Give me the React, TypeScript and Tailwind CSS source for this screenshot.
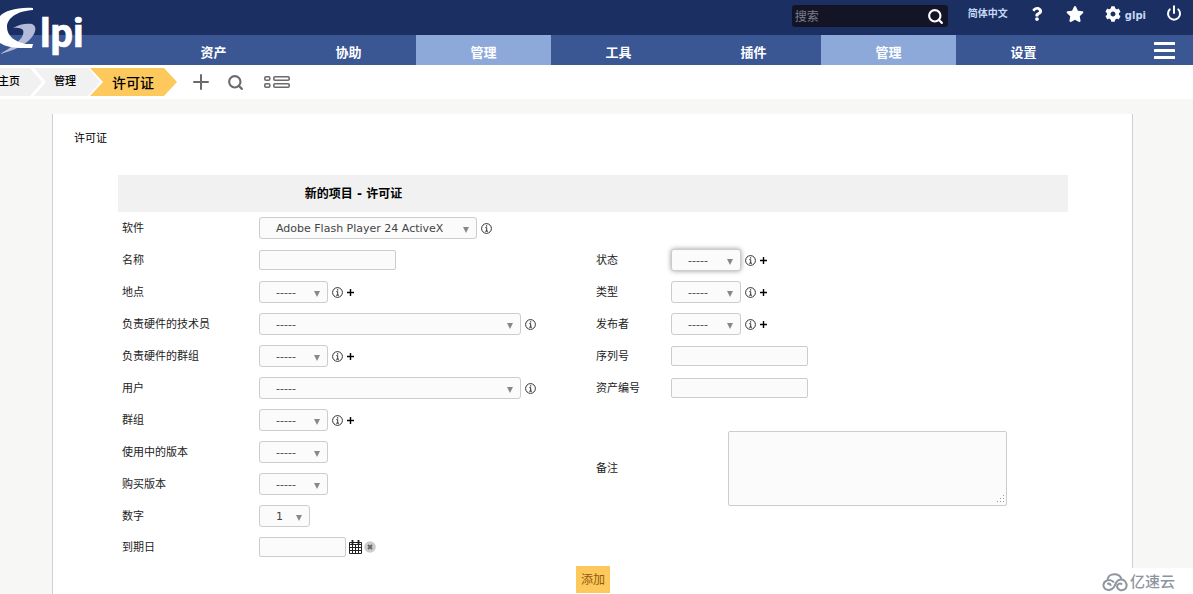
import { ReactNode } from "react";
import { Plus, Power, Search } from "lucide-react";
import { FaCog, FaQuestion, FaStar } from "react-icons/fa";

type Field = {
  id: string;
  label: string;
  kind: "select" | "text" | "date";
  value?: string;
  width: string;
  info?: boolean;
  add?: boolean;
  focused?: boolean;
};

const menu = [
  { label: "资产", active: false },
  { label: "协助", active: false },
  { label: "管理", active: true },
  { label: "工具", active: false },
  { label: "插件", active: false },
  { label: "管理", active: true },
  { label: "设置", active: false },
];

const leftFields: Field[] = [
  { id: "software", label: "软件", kind: "select", value: "Adobe Flash Player 24 ActiveX", width: "w-[218px]", info: true },
  { id: "name", label: "名称", kind: "text", width: "w-[137px]" },
  { id: "location", label: "地点", kind: "select", width: "w-[69px]", info: true, add: true },
  { id: "tech", label: "负责硬件的技术员", kind: "select", width: "w-[262px]", info: true },
  { id: "techgroup", label: "负责硬件的群组", kind: "select", width: "w-[69px]", info: true, add: true },
  { id: "user", label: "用户", kind: "select", width: "w-[262px]", info: true },
  { id: "group", label: "群组", kind: "select", width: "w-[69px]", info: true, add: true },
  { id: "version-use", label: "使用中的版本", kind: "select", width: "w-[69px]" },
  { id: "version-buy", label: "购买版本", kind: "select", width: "w-[69px]" },
  { id: "number", label: "数字", kind: "select", value: "1", width: "w-[51px]" },
  { id: "expire", label: "到期日", kind: "date", width: "w-[87px]" },
];

const rightFields: Field[] = [
  { id: "state", label: "状态", kind: "select", width: "w-[70px]", info: true, add: true, focused: true },
  { id: "type", label: "类型", kind: "select", width: "w-[70px]", info: true, add: true },
  { id: "publisher", label: "发布者", kind: "select", width: "w-[70px]", info: true, add: true },
  { id: "serial", label: "序列号", kind: "text", width: "w-[137px]" },
  { id: "inventory", label: "资产编号", kind: "text", width: "w-[137px]" },
];

function Logo() {
  return (
    <a href="#" aria-label="GLPI" className="absolute left-0 top-0 z-10">
      <svg width="90" height="60" viewBox="0 0 90 60">
        <path d="M13 28C19 24 27 23 32 24C37 26 36 32 32 37C25 46 12 51 0 54C10 48 18 43 22 37C25 31 24 27 13 28Z" fill="#b4bbd9" />
        <path d="M33 8C17 7 5 11 0 16V43C6 47 14 48 24 48H32L33 44H26C15 42 7 36 7 27C7 18 17 11 33 10Z" fill="#fff" />
        <text x="40" y="47" fill="#fff" stroke="#fff" strokeWidth="0.6" fontFamily="Roboto, sans-serif" fontWeight="700" fontSize="40">lpi</text>
      </svg>
    </a>
  );
}

function InfoIcon() {
  return (
    <svg width="11" height="11" viewBox="0 0 11 11" fill="none" stroke="#333">
      <circle cx="5.5" cy="5.5" r="4.9" />
      <path d="M4.3 4.6H5.7V8M4.2 8.2H7" />
      <path d="M5 2.8H6.2" strokeWidth="1.2" />
    </svg>
  );
}

function AddIcon() {
  return (
    <svg width="7" height="7" viewBox="0 0 7 7" stroke="#000" strokeWidth="1.4">
      <path d="M3.5 0V7M0 3.5H7" />
    </svg>
  );
}

function CalendarIcon() {
  return (
    <svg width="13" height="14" viewBox="0 0 13 14" fill="none" stroke="#222">
      <path d="M0.5 2.5H12.5V13.5H0.5ZM0.5 4.5H12.5M0.5 7.5H12.5M0.5 10.5H12.5M3.5 4V13.5M6.5 4V13.5M9.5 4V13.5" />
      <path d="M3.5 0V4M9.5 0V4" strokeWidth="1.8" />
    </svg>
  );
}

function SelectBox({ field }: { field: Field }) {
  const value = field.value ?? "-----";
  return (
    <span className={`relative block ${field.width}`}>
      <select
        id={field.id}
        className={`block h-[22px] w-full appearance-none rounded-[3px] border border-[#ccc] bg-[#fbfbfb] pt-[3px] pl-4 font-['DejaVu_Sans',sans-serif] text-[11px] text-[#444] outline-none ${
          field.focused ? "shadow-[0_0_5px_rgba(0,0,0,0.4)]" : ""
        }`}
      >
        <option>{value}</option>
      </select>
      <svg className="pointer-events-none absolute right-2 top-[10px]" width="6" height="6" viewBox="0 0 6 6">
        <path d="M0 0H6L3 6Z" fill="#888" />
      </svg>
    </span>
  );
}

function Control({ field }: { field: Field }) {
  if (field.kind === "select") {
    return <SelectBox field={field} />;
  }
  return (
    <input
      id={field.id}
      type="text"
      className={`h-5 rounded-[2px] border border-[#ccc] bg-[#fbfbfb] px-1 text-[11px] outline-none ${field.width}`}
    />
  );
}

function Row({ field, labelWidth }: { field: Field; labelWidth: string }) {
  return (
    <div className={`flex items-center ${field.kind === "date" ? "h-[30px]" : "h-8"}`}>
      <label htmlFor={field.id} className={`shrink-0 pt-0.5 ${labelWidth}`}>
        {field.label}
      </label>
      <Control field={field} />
      {field.info && (
        <button type="button" aria-label={`${field.label} info`} className="ml-1">
          <InfoIcon />
        </button>
      )}
      {field.add && (
        <button type="button" aria-label={`${field.label} +`} className="ml-1">
          <AddIcon />
        </button>
      )}
      {field.kind === "date" && (
        <>
          <button type="button" aria-label="calendar" className="ml-[3px]">
            <CalendarIcon />
          </button>
          <button type="button" aria-label="clear" className="ml-0.5">
            <svg width="12" height="12" viewBox="0 0 12 12">
              <circle cx="6" cy="6" r="5.8" fill="#ccc" />
              <path d="M4 4L8 8M8 4L4 8" stroke="#666" strokeWidth="1.8" />
            </svg>
          </button>
        </>
      )}
    </div>
  );
}

function IconButton({ label, children }: { label: string; children: ReactNode }) {
  return (
    <button type="button" aria-label={label} className="text-[#6b6b6b]">
      {children}
    </button>
  );
}

function Header() {
  return (
    <header className="relative">
      <Logo />
      <div className="flex h-[35px] items-start justify-end bg-[#1b2f62] pr-[11px] text-white">
        <div className="mt-[5px] flex h-[22px] w-[156px] items-center rounded-[3px] bg-[#131526] pr-1">
          <input
            type="text"
            aria-label="搜索"
            placeholder="搜索"
            className="w-full min-w-0 bg-transparent px-[3px] pt-0.5 text-xs outline-none placeholder:text-[#7d7f8a]"
          />
          <button type="submit" aria-label="search">
            <Search size={17} strokeWidth={3} />
          </button>
        </div>
        <a href="#" className="ml-5 mt-1.5 text-[10px] leading-4 font-bold text-[#c5d9f5]">
          简体中文
        </a>
        <a href="#" aria-label="help" className="ml-[22px] mt-[7px]">
          <FaQuestion size={14} />
        </a>
        <a href="#" aria-label="bookmark" className="ml-[22px] mt-[5px]">
          <FaStar size={18} />
        </a>
        <a href="#" className="ml-[21px] mt-1.5 flex items-start gap-1 text-[10px] font-bold text-[#c5d9f5]">
          <FaCog size={16} className="text-white" />
          <span className="pt-0.5 leading-4">glpi</span>
        </a>
        <a href="#" aria-label="logout" className="ml-5 mt-[5px]">
          <Power size={16} strokeWidth={3} />
        </a>
      </div>
      <nav className="flex h-[30px] bg-[#3a5693] pl-[146px] text-[13px] font-bold text-white">
        {menu.map((item, i) => (
          <a
            key={i}
            href="#"
            className={`flex flex-1 items-center justify-center pt-1.5 ${item.active ? "bg-[#8da9da]" : ""}`}
          >
            {item.label}
          </a>
        ))}
        <button type="button" aria-label="menu" className="flex w-[102px] items-center justify-end pr-[18px]">
          <svg width="21" height="17" viewBox="0 0 21 17" fill="currentColor">
            <rect width="21" height="3" rx="0.5" />
            <rect y="7" width="21" height="3" rx="0.5" />
            <rect y="14" width="21" height="3" rx="0.5" />
          </svg>
        </button>
      </nav>
    </header>
  );
}

function Breadcrumb() {
  return (
    <div className="flex h-[34px] items-center bg-white">
      <ul className="flex h-7 text-[11px] font-medium text-black">
        <li className="flex w-[42px] items-center bg-[#f1f1f1] [clip-path:polygon(0_0,30px_0,100%_50%,30px_100%,0_100%)]">
          <a href="#" className="-ml-0.5">主页</a>
        </li>
        <li className="-ml-2 flex w-[68px] items-center bg-[#f1f1f1] pl-5 [clip-path:polygon(0_0,54px_0,66px_50%,54px_100%,0_100%,12px_50%)]">
          <a href="#">管理</a>
        </li>
        <li className="-ml-3 flex w-[87px] items-center bg-[#fec95c] pt-0.5 pl-[22px] text-sm [clip-path:polygon(0_0,74px_0,100%_50%,74px_100%,0_100%,13px_50%)]">
          <a href="#">许可证</a>
        </li>
      </ul>
      <div className="ml-3 flex items-center gap-3.5">
        <IconButton label="add">
          <Plus size={24} strokeWidth={2} />
        </IconButton>
        <IconButton label="find">
          <Search size={17} strokeWidth={3} />
        </IconButton>
        <IconButton label="templates">
          <svg className="ml-1.5" width="26" height="12" viewBox="0 0 26 12" fill="none" stroke="currentColor" strokeWidth="1.6">
            <rect x="0.8" y="0.8" width="5" height="3.4" rx="1.2" />
            <rect x="0.8" y="7.8" width="5" height="3.4" rx="1.2" />
            <rect x="9.8" y="0.8" width="15.4" height="3.4" rx="1.2" />
            <rect x="9.8" y="7.8" width="15.4" height="3.4" rx="1.2" />
          </svg>
        </IconButton>
      </div>
    </div>
  );
}

function Watermark() {
  return (
    <div className="fixed right-0 bottom-0 flex h-[26px] w-[93px] items-center gap-0.5 bg-white pt-0.5 pl-0.5 text-[15px] font-medium text-[#8f949e]">
      <svg width="26" height="19" viewBox="0 0 26 19" fill="none" stroke="currentColor" strokeWidth="2">
        <path d="M5.5 7.5C5.5 3.5 8.5 1.2 12.5 1.2C16 1.2 18.5 3 19.3 6" />
        <path d="M8.5 13C9 10.5 6.5 10 5.5 11.5M12 9.5C10 7 6.5 6.5 4 8C1 9.5 .5 13.5 3 15.8C6 18 10 17 12 14L14.5 9C16.5 6 21 5.5 23.2 8.5C25.5 11.5 25 15 22 16.7C19 18.2 15.5 16.5 15 13.5C15 11 18 9.5 20 11.5" />
      </svg>
      亿速云
    </div>
  );
}

export default function App() {
  return (
    <div className="min-h-screen bg-[#f7f7f5] font-['DejaVu_Sans','Noto_Sans_CJK_SC',sans-serif] text-[11px] text-[#222]">
      <Header />
      <Breadcrumb />
      <main className="mt-[15px] mr-[60px] ml-[52px] border-x border-[#d0d0d0] bg-white pr-16 pb-2 pl-[65px]">
        <h1 className="-ml-11 pt-[17px] pb-7 leading-4 text-black">许可证</h1>
        <form>
          <div className="grid h-[37px] grid-cols-2 items-center bg-[#f1f1f1]">
            <h2 className="pt-px pr-1 text-center text-xs font-bold text-black">新的项目 - 许可证</h2>
          </div>
          <div className="grid grid-cols-2">
            <div className="px-1">
              {leftFields.map((field) => (
                <Row key={field.id} field={field} labelWidth="w-[137px]" />
              ))}
            </div>
            <div className="pt-8 pr-[5px] pl-[3px]">
              {rightFields.map((field) => (
                <Row key={field.id} field={field} labelWidth="w-[75px]" />
              ))}
              <div className="flex items-center pt-[27px]">
                <label htmlFor="comment" className="w-[75px] shrink-0 pt-0.5">
                  备注
                </label>
                <div className="flex flex-1 justify-center">
                  <div className="relative">
                    <textarea
                      id="comment"
                      className="block h-[75px] w-[279px] resize-none rounded-[2px] border border-[#ccc] bg-[#fbfbfb] p-1 outline-none"
                    />
                    <svg className="pointer-events-none absolute right-[3px] bottom-[3px]" width="8" height="8" viewBox="0 0 8 8" fill="#999">
                      <path d="M7 0H8V1H7ZM4 3H5V4H4ZM7 3H8V4H7ZM1 6H2V7H1ZM4 6H5V7H4ZM7 6H8V7H7Z" />
                    </svg>
                  </div>
                </div>
              </div>
            </div>
          </div>
          <div className="flex justify-center pt-1">
            <button type="submit" className="h-[27px] bg-[#fec95c] px-[5px] pt-px text-xs text-[#8f5a0a]">
              添加
            </button>
          </div>
        </form>
      </main>
      <Watermark />
    </div>
  );
}
